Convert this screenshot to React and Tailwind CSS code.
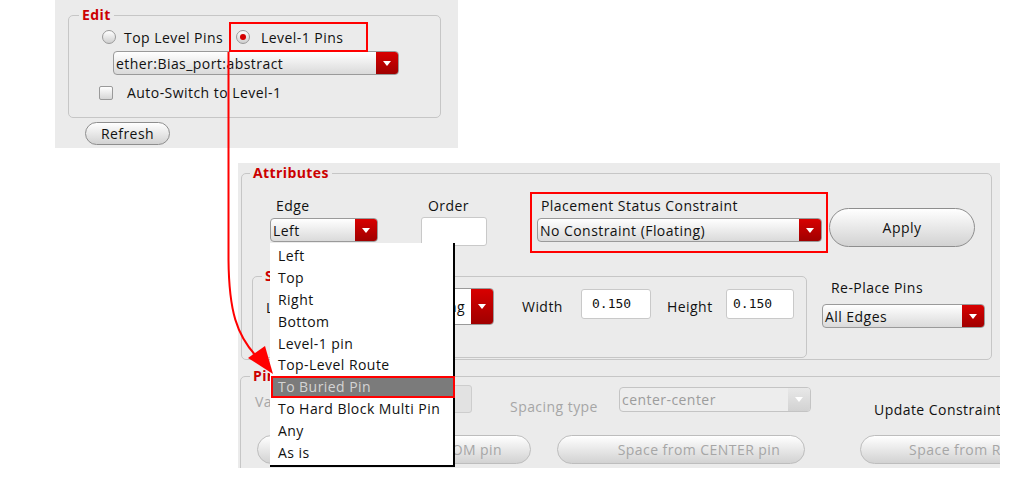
import React from 'react';

const Tri = ({ color = 'white' }) => (
  <svg width="8" height="5" viewBox="0 0 8 5">
    <path d="M0 0 L8 0 L4 5 Z" fill={color} />
  </svg>
);

function Combo({ text, className = '', disabled = false }) {
  return (
    <div
      className={`flex items-stretch rounded-[4px] border ${
        disabled ? 'border-[#c4c4c4] bg-[#ededed] text-[#9c9c9c]' : 'border-[#9a9a9a] bg-linear-to-b from-white to-[#dadada] text-[#111]'
      } ${className}`}
    >
      <span className="flex flex-1 items-center overflow-hidden whitespace-nowrap pl-[2px]">{text}</span>
      <span
        className={`flex w-[22px] items-center justify-center rounded-r-[3px] ${
          disabled ? 'bg-linear-to-b from-[#e8e8e8] to-[#d2d2d2]' : 'bg-linear-to-b from-[#d80000] to-[#a00000]'
        }`}
      >
        <Tri />
      </span>
    </div>
  );
}

function Pill({ children, className = '', disabled = false }) {
  return (
    <div
      className={`flex items-center justify-center whitespace-nowrap rounded-full border bg-linear-to-b from-white to-[#d2d2d2] ${
        disabled ? 'border-[#bdbdbd] text-[#a6a6a6]' : 'border-[#8e8e8e] text-[#111]'
      } ${className}`}
    >
      {children}
    </div>
  );
}

function Radio({ checked }) {
  return (
    <span className="flex h-[14px] w-[14px] shrink-0 items-center justify-center rounded-full border border-[#9a9a9a] bg-linear-to-b from-white to-[#cfcfcf]">
      {checked && <span className="h-[6px] w-[6px] rounded-full bg-[#d40000]" />}
    </span>
  );
}

const Legend = ({ children, className = '' }) => (
  <legend className={`px-[3px] text-[14px] font-bold leading-[18px] tracking-[0.4px] text-[#cc0000] ${className}`}>{children}</legend>
);

const edgeItems = ['Left', 'Top', 'Right', 'Bottom', 'Level-1 pin', 'Top-Level Route', 'To Buried Pin', 'To Hard Block Multi Pin', 'Any', 'As is'];

export default function App() {
  return (
    <div className="relative h-[497px] w-[1013px] overflow-hidden bg-white font-['Open_Sans',sans-serif] text-[14px] tracking-[0.45px] text-[#111]">
      {/* Edit panel */}
      <div className="ml-[55px] h-[148px] w-[403px] bg-[#ebebeb] pt-[6px]">
        <fieldset className="ml-[13px] h-[112px] w-[373px] rounded-[5px] border border-[#c6c6c6]">
          <Legend className="ml-[10px]">Edit</Legend>
          <div className="-mt-[2px] flex h-[30px] items-center pl-[33px]">
            <Radio />
            <span className="ml-[8px] whitespace-nowrap">Top Level Pins</span>
            <div className="ml-[6px] flex h-[30px] w-[139px] shrink-0 items-center border-2 border-[#ff0000] pl-[5px]">
              <Radio checked />
              <span className="ml-[11px] whitespace-nowrap">Level-1 Pins</span>
            </div>
          </div>
          <Combo text="ether:Bias_port:abstract" className="-mt-[1px] ml-[44px] h-[24px] w-[286px]" />
          <div className="ml-[30px] mt-[7px] flex items-center">
            <span className="h-[14px] w-[14px] rounded-[2px] border border-[#9a9a9a] bg-linear-to-b from-white to-[#d6d6d6]" />
            <span className="ml-[14px]">Auto-Switch to Level-1</span>
          </div>
        </fieldset>
        <Pill className="ml-[30px] mt-[4px] h-[23px] w-[85px]">Refresh</Pill>
      </div>

      {/* Attributes panel */}
      <div className="ml-[238px] mt-[15px] h-[305px] w-[762px] overflow-hidden bg-[#ebebeb] pt-[1px]">
        <fieldset className="ml-[3px] h-[196px] w-[751px] rounded-[5px] border border-[#c6c6c6]">
          <Legend className="ml-[8px]">Attributes</Legend>
          <div className="mt-[10px] flex items-start pl-[28px]">
            <div className="w-[108px] pt-[6px]">
              <div className="pl-[6px] leading-[16px]">Edge</div>
              <Combo text="Left" className="mt-[4px] h-[24px] w-[108px]" />
            </div>
            <div className="ml-[43px] w-[66px] pt-[6px]">
              <div className="pl-[7px] leading-[16px]">Order</div>
              <div className="mt-[3px] h-[29px] w-[66px] rounded-[3px] border border-[#c9c9c9] bg-white" />
            </div>
            <div className="ml-[43px] h-[61px] w-[298px] border-2 border-[#ff0000] px-[5px] pt-[4px]">
              <div className="whitespace-nowrap pl-[4px] leading-[16px]">Placement Status Constraint</div>
              <Combo text="No Constraint (Floating)" className="mt-[4px] h-[24px] w-[285px]" />
            </div>
            <Pill className="ml-[1px] mt-[16px] h-[39px] w-[146px] rounded-[10px]">Apply</Pill>
          </div>
          <div className="mt-[14px] flex items-start pl-[10px]">
            <fieldset className="h-[91px] w-[555px] rounded-[5px] border border-[#c6c6c6]">
              <Legend className="ml-[9px]">Size</Legend>
              <div className="flex items-start pl-[13px]">
                <span className="mt-[12px] w-[34px]">Layer</span>
                <div className="mt-[3px] flex h-[37px] w-[194px] items-stretch rounded-[4px] border border-[#9a9a9a] bg-white">
                  <span className="flex flex-1 items-center justify-end whitespace-nowrap pr-[6px]">Metal1 drawing</span>
                  <span className="flex w-[22px] items-center justify-center rounded-r-[3px] bg-linear-to-b from-[#d80000] to-[#a00000]">
                    <Tri />
                  </span>
                </div>
                <span className="ml-[28px] mt-[11px] w-[59px]">Width</span>
                <div className="mt-[4px] flex h-[30px] w-[70px] items-center rounded-[3px] border border-[#c9c9c9] bg-white pl-[10px] font-['DejaVu_Sans_Mono',monospace] text-[13px] tracking-normal">0.150</div>
                <span className="ml-[16px] mt-[11px] w-[59px]">Height</span>
                <div className="mt-[4px] flex h-[30px] w-[68px] items-center rounded-[3px] border border-[#c9c9c9] bg-white pl-[6px] font-['DejaVu_Sans_Mono',monospace] text-[13px] tracking-normal">0.150</div>
              </div>
            </fieldset>
            <div className="ml-[15px] w-[163px]">
              <div className="mt-[13px] whitespace-nowrap pl-[9px] leading-[16px]">Re-Place Pins</div>
              <Combo text="All Edges" className="mt-[8px] h-[24px] w-[163px]" />
            </div>
          </div>
        </fieldset>

        <fieldset className="ml-[2px] mt-[7px] h-[120px] w-[800px] rounded-[5px] border border-[#c6c6c6]">
          <Legend className="ml-[9px]">Pin Spacing</Legend>
          <div className="flex items-start pl-[14px] text-[#a6a6a6]">
            <span className="mt-[6px] w-[145px]">Value</span>
            <div className="h-[28px] w-[72px] rounded-[3px] border border-[#cdcdcd] bg-[#e2e2e2]" />
            <span className="ml-[38px] mt-[11px] w-[109px] whitespace-nowrap">Spacing type</span>
            <Combo disabled text="center-center" className="mt-[2px] h-[25px] w-[192px]" />
            <span className="ml-[63px] mt-[14px] whitespace-nowrap text-[#111]">Update Constraint</span>
          </div>
          <div className="ml-[16px] mt-[15px] flex">
            <Pill disabled className="h-[29px] w-[274px] shrink-0 pl-[46px]">Space from BOTTOM pin</Pill>
            <Pill disabled className="ml-[26px] h-[29px] w-[248px] shrink-0 pl-[36px]">Space from CENTER pin</Pill>
            <Pill disabled className="ml-[55px] h-[29px] w-[250px] shrink-0">Space from RIGHT pin</Pill>
          </div>
        </fieldset>
      </div>

      {/* open edge list */}
      <div className="absolute left-[270px] top-[243px] h-[224px] w-[185px] border-b-2 border-r-2 border-black bg-white pt-[2px]">
        {edgeItems.map((item) =>
          item === 'To Buried Pin' ? (
            <div
              key={item}
              className="-mr-[2px] ml-[1px] flex h-[22px] items-center whitespace-nowrap border-2 border-[#ff0000] bg-[#7b7b7b] pl-[5px] text-[#d4d4d4]"
            >
              {item}
            </div>
          ) : (
            <div key={item} className="flex h-[21.8px] items-center whitespace-nowrap pl-[8px]">
              {item}
            </div>
          )
        )}
      </div>

      {/* red callout arrow */}
      <svg className="pointer-events-none absolute left-0 top-0" width="1013" height="497">
        <path d="M228.5 52 L228.5 260 C229 312 237 335 256 356" stroke="#ff0000" strokeWidth="2" fill="none" />
        <polygon points="248,358 265,346 273,374" fill="#ff0000" />
      </svg>
    </div>
  );
}
